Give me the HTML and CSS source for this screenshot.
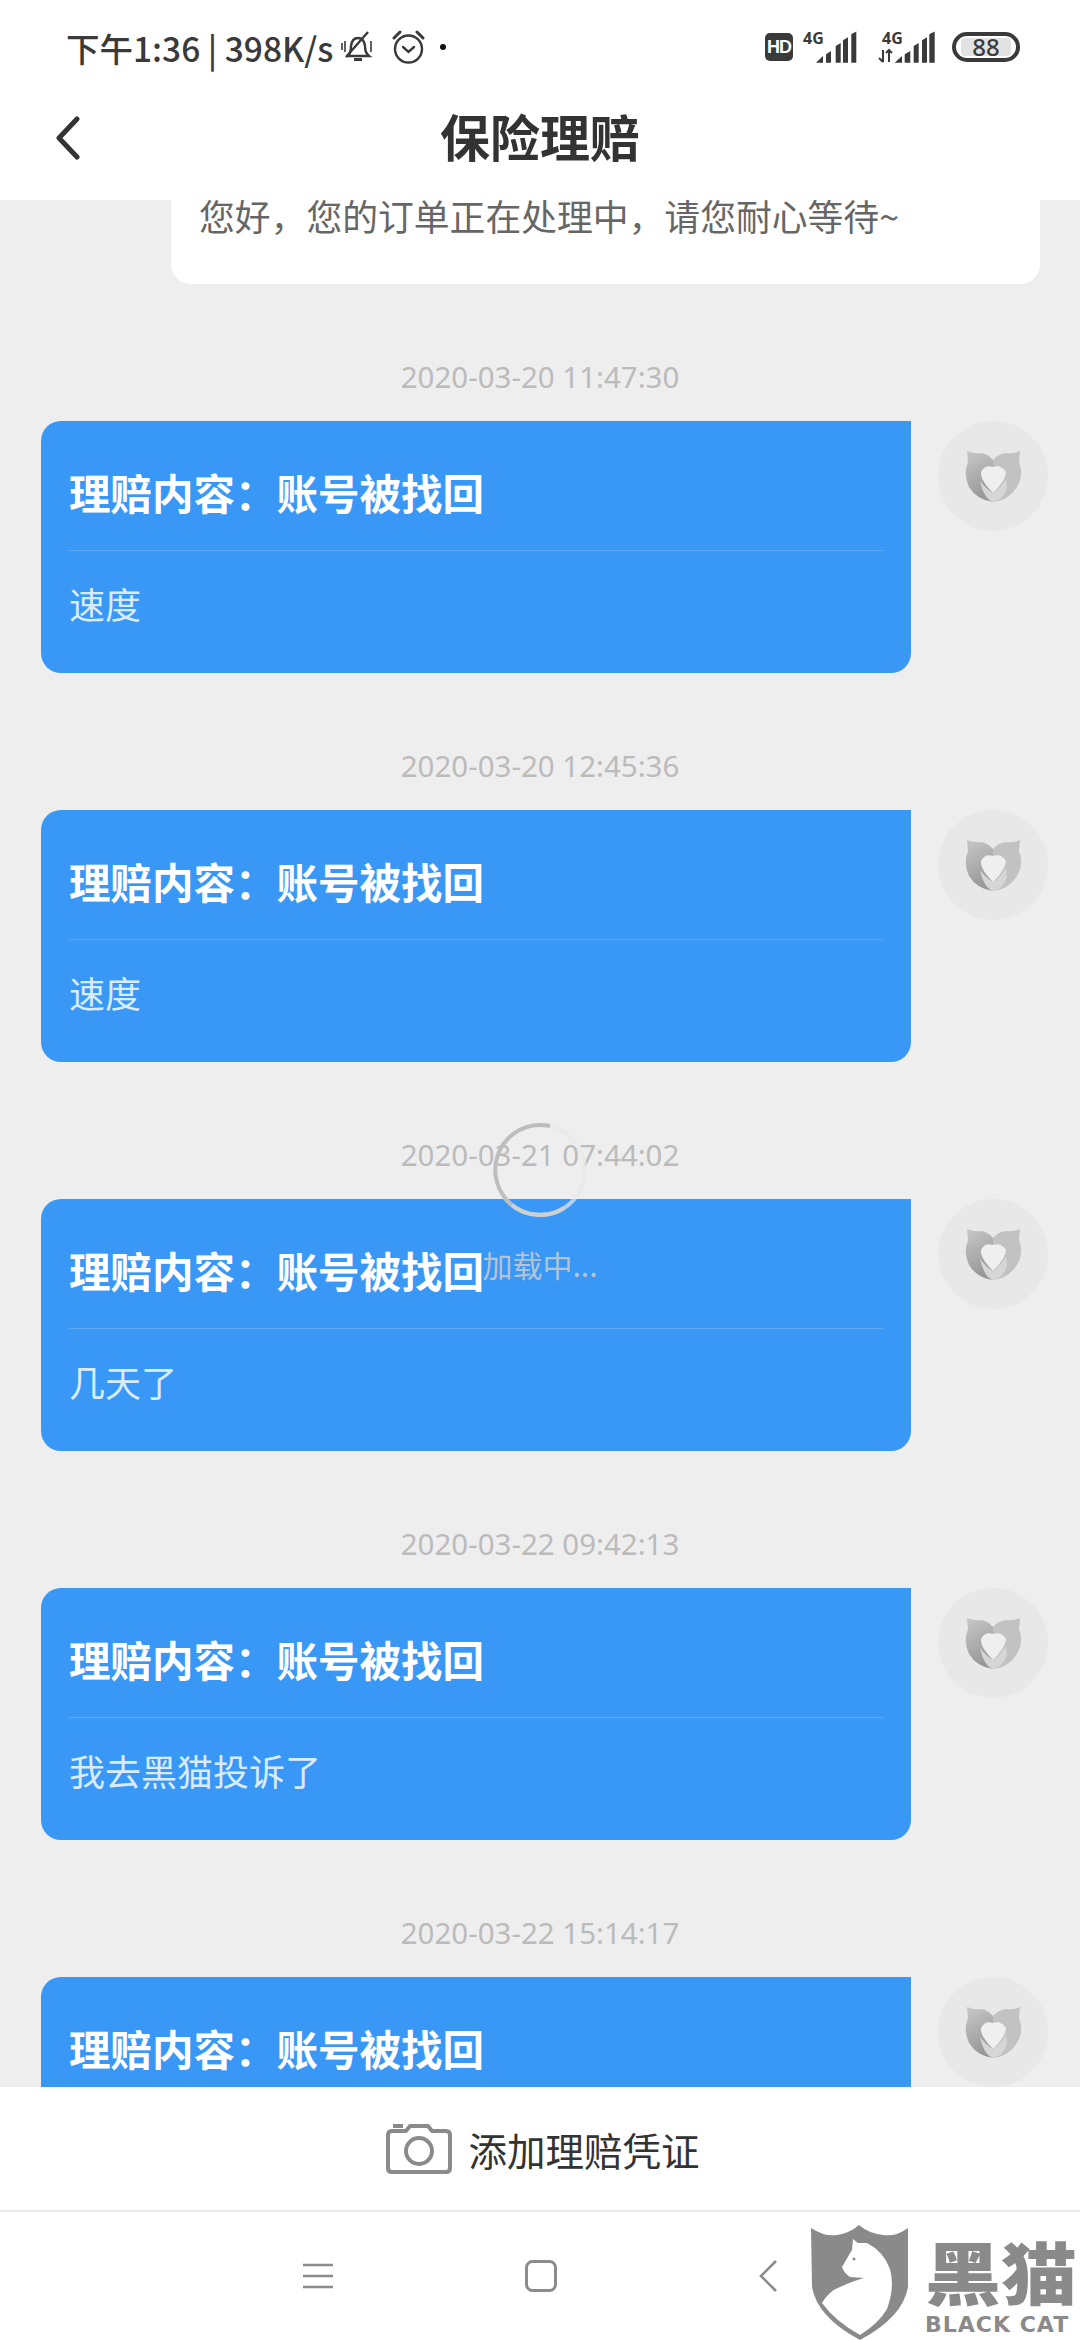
FILE: index.html
```html
<!DOCTYPE html>
<html lang="zh-CN">
<head>
    <meta charset="UTF-8">
    <meta name="viewport" content="width=device-width, initial-scale=1.0">
    <title>保险理赔</title>
    <link rel="stylesheet" href="styles.css">
</head>
<body>
    <svg class="defs" width="0" height="0">
        <defs>
            <linearGradient id="catLeft" x1="0" y1="0" x2="0.3" y2="1">
                <stop offset="0" stop-color="#c8c8c8"/>
                <stop offset="1" stop-color="#989898"/>
            </linearGradient>
            <symbol id="catMark" viewBox="0 0 57 52">
                <path fill="url(#catLeft)" d="M2 1 Q10 4 16 3 Q23 4 28 10 L28 52 Q12 50 4 37 Q-2 24 3 12Z"/>
                <path fill="#c2c2c2" d="M55 1 Q47 4 41 3 Q33 4 28 10 L28 52 Q45 50 53 35 Q59 24 54 12Z"/>
                <path fill="#d6d6d6" d="M15 31 Q19 49 28 52 Q38 50 42 38 L41 29 Q34 40 28 43 Q20 38 15 31Z"/>
                <path fill="#efefef" d="M28 17 Q20 14 16 22 Q15 30 28 43 Q41 30 41 22 Q36 14 28 17Z"/>
            </symbol>
        </defs>
    </svg>

    <div class="page">
        <div class="status-bar">
            <div class="status-left">
                <span class="status-text">下午1:36 | 398K/s</span>
                <svg class="status-icon bell" viewBox="0 0 33 32" width="33" height="32" fill="none" stroke="#3a3a3a" stroke-width="2.4">
                    <path d="M7 25 Q10 22 10 15 Q11 7 17 7 Q23 7 24 15 Q24 22 28 25Z"/>
                    <path d="M13 28.5 H21" stroke-width="3"/>
                    <path d="M27 1 L5 26"/>
                    <path d="M1 12 V19 M4 10 V21 M30 10 V21" stroke-width="1.6"/>
                </svg>
                <svg class="status-icon alarm" viewBox="0 0 33 34" width="33" height="34" fill="none" stroke="#3a3a3a" stroke-width="2.4">
                    <circle cx="16.5" cy="19" r="13.5"/>
                    <path d="M11 17 L16.5 22 L22 17" stroke-linecap="round"/>
                    <path d="M2 8 L8 2 M31 8 L25 2" stroke-linecap="round" stroke-width="3"/>
                </svg>
                <span class="status-dot"></span>
            </div>
            <div class="status-right">
                <span class="hd-badge">HD</span>
                <svg class="signal" viewBox="0 0 54 32" width="54" height="32">
                    <text x="0" y="13" class="net-label">4G</text>
                    <path fill="#3a3a3a" d="M13 31.700 L20 25 V31.700Z M23 23.300 L28 20 V31.700 H23Z M32.700 15 L37.700 12 V31.700 H32.700Z M40 9.300 L45 6.300 V31.700 H40Z M48.300 3.300 L53.300 0.500 V31.700 H48.300Z"/>
                </svg>
                <svg class="signal" viewBox="0 0 58 32" width="58" height="32">
                    <text x="4" y="13" class="net-label">4G</text>
                    <path fill="none" stroke="#3a3a3a" stroke-width="2" d="M5 19 V31 M1 27 L5 31 M11 31 V19 M8 22 L11 19 L14 22"/>
                    <path fill="#3a3a3a" d="M16.700 31.700 L24 25 V31.700Z M26.700 23.300 L32.300 20 V31.700 H26.700Z M35.700 15 L40.700 12 V31.700 H35.700Z M44 9.300 L49 6.300 V31.700 H44Z M51.300 3.300 L56.700 0.500 V31.700 H51.300Z"/>
                </svg>
                <div class="battery"><span class="battery-level">88</span></div>
            </div>
        </div>

        <header class="top-bar">
            <svg class="back-icon" viewBox="0 0 24 44" width="24" height="44" fill="none" stroke="#333" stroke-width="5" stroke-linecap="round" stroke-linejoin="round">
                <path d="M21 3 L3 22 L21 41"/>
            </svg>
            <h1 class="title">保险理赔</h1>
        </header>

        <main class="chat">
            <div class="notice">您好，您的订单正在处理中，请您耐心等待~</div>

            <div class="time">2020-03-20 11:47:30</div>
            <div class="msg-row">
                <div class="bubble">
                    <div class="bubble-title">理赔内容：账号被找回</div>
                    <div class="bubble-text">速度</div>
                </div>
                <div class="avatar"><svg width="57" height="52"><use href="#catMark"/></svg></div>
            </div>

            <div class="time">2020-03-20 12:45:36</div>
            <div class="msg-row">
                <div class="bubble">
                    <div class="bubble-title">理赔内容：账号被找回</div>
                    <div class="bubble-text">速度</div>
                </div>
                <div class="avatar"><svg width="57" height="52"><use href="#catMark"/></svg></div>
            </div>

            <div class="time">2020-03-21 07:44:02</div>
            <div class="msg-row">
                <div class="bubble">
                    <div class="bubble-title">理赔内容：账号被找回</div>
                    <div class="bubble-text">几天了</div>
                </div>
                <div class="avatar"><svg width="57" height="52"><use href="#catMark"/></svg></div>
            </div>

            <div class="time">2020-03-22 09:42:13</div>
            <div class="msg-row">
                <div class="bubble">
                    <div class="bubble-title">理赔内容：账号被找回</div>
                    <div class="bubble-text">我去黑猫投诉了</div>
                </div>
                <div class="avatar"><svg width="57" height="52"><use href="#catMark"/></svg></div>
            </div>

            <div class="time">2020-03-22 15:14:17</div>
            <div class="msg-row">
                <div class="bubble">
                    <div class="bubble-title">理赔内容：账号被找回</div>
                </div>
                <div class="avatar"><svg width="57" height="52"><use href="#catMark"/></svg></div>
            </div>
        </main>

        <div class="add-proof">
            <svg viewBox="0 0 66 52" width="66" height="52" fill="none" stroke="#8a8a8a" stroke-width="4" stroke-linejoin="round">
                <path d="M6 8 H20 L24 3 H42 L46 8 H60 Q64 8 64 12 V45 Q64 49 60 49 H6 Q2 49 2 45 V12 Q2 8 6 8Z"/>
                <path d="M7 3 H17"/>
                <circle cx="33" cy="28" r="13"/>
            </svg>
            <span class="add-proof-text">添加理赔凭证</span>
        </div>

        <nav class="nav-bar">
            <svg viewBox="0 0 30 26" width="30" height="26" stroke="#8c8c8c" stroke-width="2.600">
                <path d="M0 2 H30 M0 13 H30 M0 24 H30"/>
            </svg>
            <svg viewBox="0 0 32 32" width="32" height="32" fill="none" stroke="#8c8c8c" stroke-width="3">
                <rect x="1.500" y="1.500" width="29" height="29" rx="6"/>
            </svg>
            <svg class="nav-back" viewBox="0 0 18 32" width="18" height="32" fill="none" stroke="#8c8c8c" stroke-width="2.600">
                <path d="M17 1 L2 16 L17 31"/>
            </svg>
        </nav>

        <!-- loading overlay -->
        <div class="loading">
            <svg class="spinner" viewBox="0 0 96 96" width="96" height="96" fill="none" stroke-width="4">
                <circle cx="48" cy="48" r="45" stroke="#e8e8e8" stroke-opacity="0.7"/>
                <path d="M58 4 A45 45 0 0 0 48 3 A45 45 0 0 0 20 83" stroke="#bdbdbd"/>
                <path d="M20 83 A45 45 0 0 0 72 86" stroke="#d0d0d0"/>
            </svg>
            <span class="loading-text">加载中...</span>
        </div>

        <!-- watermark -->
        <div class="watermark">
            <svg viewBox="0 0 97 115" width="97" height="115">
                <path fill="#8a8a8a" d="M0 3 Q14 12 26 10 Q39 8 48 0 Q57 8 72 10 Q85 12 97 3 V62 Q92 92 49 115 Q6 92 1 62Z"/>
                <path fill="#fff" d="M42 14 L47 18 L56 18 Q72 26 79 44 Q84 62 76 84 Q68 98 49 110 Q24 96 11 78 Q18 66 29 62 Q42 56 53 53 L39 52 Q33 48 31 42 L38 30 L41 25Z"/>
                <circle cx="43" cy="34" r="1.500" fill="#8a8a8a"/>
            </svg>
            <div class="watermark-name">
                <span class="watermark-cn">黑猫</span>
                <span class="watermark-en">BLACK CAT</span>
            </div>
        </div>
    </div>
</body>
</html>
```

FILE: styles.css
```css
* {
    box-sizing: border-box;
}

body {
    margin: 0;
    font-family: "Noto Sans CJK SC", "Noto Sans", sans-serif;
    color: #333;
}

.defs {
    display: block;
    height: 0;
}

.page {
    position: relative;
    display: flex;
    flex-direction: column;
    width: 1080px;
    height: 2340px;
    overflow: hidden;
    background-color: #fff;
}

/* status bar */
.status-bar {
    display: flex;
    justify-content: space-between;
    align-items: center;
    height: 94px;
    padding: 0 60px 0 66px;
    color: #3a3a3a;
}

.status-left,
.status-right {
    display: flex;
    align-items: center;
}

.status-text {
    font-size: 33.5px;
    font-weight: 500;
    white-space: nowrap;
}

.bell {
    margin-left: 8px;
}

.alarm {
    margin-left: 18px;
}

.status-dot {
    width: 6px;
    height: 6px;
    margin-left: 15px;
    border-radius: 50%;
    background-color: #111;
}

.hd-badge {
    width: 28px;
    height: 28px;
    border-radius: 5px;
    background-color: #3a3a3a;
    color: #fff;
    font-family: "Liberation Sans", sans-serif;
    font-size: 18px;
    font-weight: bold;
    line-height: 28px;
    text-align: center;
    letter-spacing: -1px;
}

.signal {
    margin-left: 10px;
    overflow: visible;
}

.signal + .signal {
    margin-left: 21px;
}

.net-label {
    font-family: "Noto Sans", sans-serif;
    font-size: 16px;
    font-weight: 700;
    fill: #3a3a3a;
}

.battery {
    display: flex;
    align-items: center;
    justify-content: center;
    width: 68px;
    height: 30px;
    margin-left: 16px;
    border: 4px solid #3a3a3a;
    border-radius: 15px;
}

.battery-level {
    width: 50px;
    height: 18px;
    border-radius: 4px;
    background-color: #e2e2e2;
    font-family: "Noto Sans", sans-serif;
    font-size: 24px;
    font-weight: 500;
    line-height: 18px;
    text-align: center;
}

/* header */
.top-bar {
    display: grid;
    grid-template-columns: 1fr auto 1fr;
    align-items: center;
    height: 106px;
    padding-bottom: 18px;
}

.back-icon {
    margin-left: 56px;
}

.title {
    margin: 0 0 6px;
    font-size: 50px;
    font-weight: 700;
    line-height: 60px;
    color: #333;
}

/* chat list */
.chat {
    flex: 1;
    min-height: 0;
    overflow: hidden;
    background-color: #eee;
}

.notice {
    width: 869px;
    height: 94px;
    margin: -10px 0 0 171px;
    padding-left: 28px;
    border-radius: 0 0 20px 20px;
    background-color: #fff;
    color: #666;
    font-size: 35.8px;
    line-height: 50px;
}

.time {
    margin-top: 73px;
    margin-bottom: 24px;
    color: #bbb;
    font-family: "Noto Sans", sans-serif;
    font-size: 29.5px;
    line-height: 40px;
    text-align: center;
}

.msg-row {
    display: flex;
    align-items: flex-start;
    gap: 27px;
    padding-left: 41px;
}

.bubble {
    width: 870px;
    height: 252px;
    padding: 0 28px;
    border-radius: 20px 0 20px 20px;
    background-color: #3998f5;
}

.bubble-title {
    height: 130px;
    padding-top: 43px;
    border-bottom: 1px solid rgba(255, 255, 255, 0.18);
    color: #fff;
    font-size: 41.5px;
    font-weight: 700;
    line-height: 56px;
}

.bubble-text {
    padding-top: 27px;
    color: #d9ecff;
    font-size: 36px;
    line-height: 50px;
}

.avatar {
    display: flex;
    align-items: center;
    justify-content: center;
    width: 110px;
    height: 110px;
    border-radius: 50%;
    background-color: #e8e8e8;
}

/* bottom */
.add-proof {
    display: flex;
    align-items: center;
    justify-content: center;
    gap: 16px;
    height: 123px;
    padding-left: 6px;
    background-color: #fff;
}

.add-proof-text {
    color: #333;
    font-size: 38.5px;
    line-height: 50px;
}

.nav-bar {
    display: flex;
    align-items: center;
    justify-content: center;
    gap: 192px;
    height: 130px;
    border-top: 2px solid #e8e8e8;
    background-color: #fff;
}

.nav-back {
    margin-left: 10px;
}

/* overlays */
.loading {
    position: absolute;
    top: 1122px;
    left: 0;
    width: 100%;
    display: flex;
    flex-direction: column;
    align-items: center;
    gap: 26px;
}

.loading-text {
    color: rgba(205, 205, 205, 0.85);
    font-size: 30px;
    line-height: 40px;
}

.watermark {
    position: absolute;
    top: 2225px;
    left: 811px;
    display: flex;
    gap: 17px;
}

.watermark-name {
    display: flex;
    flex-direction: column;
    padding-top: 7px;
    color: #8a8a8a;
}

.watermark-cn {
    font-size: 76px;
    font-weight: 900;
    line-height: 76px;
    white-space: nowrap;
    transform: scaleY(0.9);
}

.watermark-en {
    margin-top: 4px;
    font-family: "DejaVu Sans", sans-serif;
    font-size: 22px;
    font-weight: bold;
    line-height: 26px;
    letter-spacing: 1px;
    white-space: nowrap;
}
```
